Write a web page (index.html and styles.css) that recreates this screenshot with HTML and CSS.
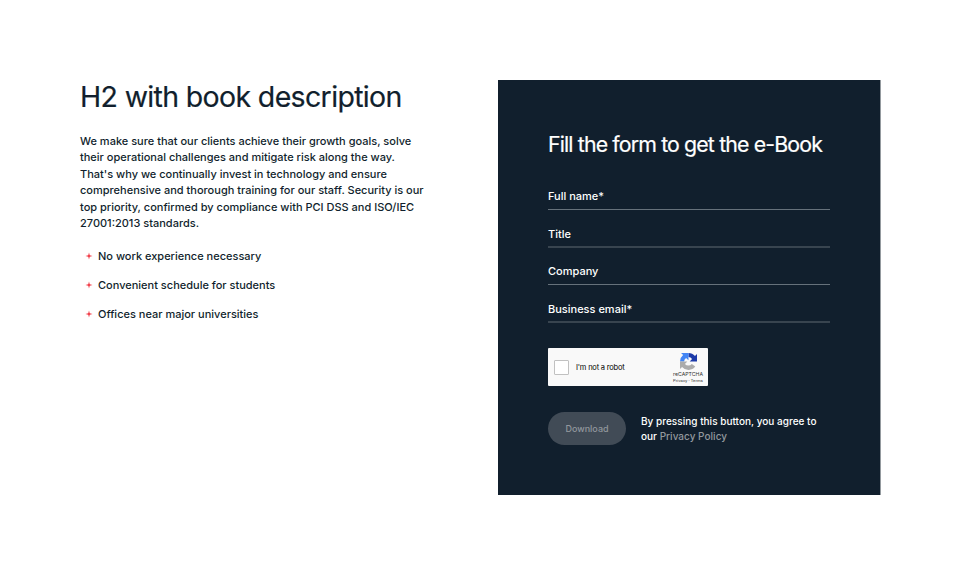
FILE: index.html
```html
<!DOCTYPE html>
<html lang="en">
<head>
<meta charset="utf-8">
<title>e-Book</title>
<link rel="stylesheet" href="styles.css">
</head>
<body>
<main class="page">
  <section class="intro">
    <h2 class="intro-title">H2 with book description</h2>
    <p class="intro-text">We make sure that our clients achieve their growth goals, solve<br>their operational challenges and mitigate risk along the way.<br>That's why we continually invest in technology and ensure<br>comprehensive and thorough training for our staff. Security is our<br>top priority, confirmed by compliance with PCI DSS and ISO/IEC<br>27001:2013 standards.</p>
    <ul class="benefits">
      <li><svg class="star" viewBox="0 0 8 8"><path d="M4 .5 4.700 3.300 7.500 4 4.700 4.700 4 7.500 3.300 4.700 .5 4 3.300 3.300Z"/></svg><span>No work experience necessary</span></li>
      <li><svg class="star" viewBox="0 0 8 8"><path d="M4 .5 4.700 3.300 7.500 4 4.700 4.700 4 7.500 3.300 4.700 .5 4 3.300 3.300Z"/></svg><span>Convenient schedule for students</span></li>
      <li><svg class="star" viewBox="0 0 8 8"><path d="M4 .5 4.700 3.300 7.500 4 4.700 4.700 4 7.500 3.300 4.700 .5 4 3.300 3.300Z"/></svg><span>Offices near major universities</span></li>
    </ul>
  </section>
  <form class="card">
    <h3 class="card-title">Fill the form to get the e-Book</h3>
    <div class="fields">
      <div class="field">Full name*</div>
      <div class="field">Title</div>
      <div class="field">Company</div>
      <div class="field">Business email*</div>
    </div>
    <div class="captcha">
      <span class="box"></span>
      <span class="robot">I'm not a robot</span>
      <div class="brand">
        <svg class="logo" viewBox="0 0 64 64">
          <path fill="#1c3aa9" d="M64 32V4l-7.700 7.700A32 32 0 0 0 31.900 0v15.500a17 17 0 0 1 13.500 7.300L36.500 32Z"/>
          <path fill="#4285f4" d="M31.900 0H4l7.700 7.700A32 32 0 0 0 0 32h15.500a17 17 0 0 1 7.300-13.500l9.100 9Z"/>
          <path fill="#ababab" d="M0 32v28l7.700-7.700A32 32 0 0 0 57.500 51L44.500 41A17 17 0 0 1 18.600 41l9-9Z"/>
        </svg>
        <span class="name">reCAPTCHA</span>
        <span class="terms">Privacy - Terms</span>
      </div>
    </div>
    <div class="actions">
      <button class="download" type="button" disabled>Download</button>
      <p class="agree">By pressing this button, you agree to<br>our <a>Privacy Policy</a></p>
    </div>
  </form>
</main>
</body>
</html>
```
FILE: styles.css
```css
* { box-sizing: border-box; margin: 0; padding: 0; }
body { background: #fff; color: #111f2d; font-family: Inter, "Liberation Sans", sans-serif; font-weight: 500; }
.page { display: flex; justify-content: space-between; align-items: flex-start; padding: 80px 80px 0 80px; }
.intro-title { font-size: 28.500px; font-weight: 400; line-height: 33px; letter-spacing: -0.65px; white-space: nowrap; -webkit-text-stroke: 0.2px; }
.intro-text { margin-top: 19.500px; font-size: 11px; line-height: 16.500px; white-space: nowrap; }
.benefits { list-style: none; margin-top: 15.500px; padding-left: 5px; font-size: 11px; }
.benefits li { display: flex; align-items: center; gap: 5px; height: 17px; margin-bottom: 12px; }
.star { width: 8px; height: 8px; fill: #f0303c; }
.card { width: 383px; height: 415px; padding: 50px; background: #111f2d; border-right: 1px solid #949a9f; color: #fff; }
.card-title { font-size: 21.300px; font-weight: 400; line-height: 28px; letter-spacing: -0.85px; white-space: nowrap; -webkit-text-stroke: 0.2px; }
.fields { display: grid; grid-template-rows: 52px 38px 37px 38px; }
.field { display: flex; align-items: flex-end; padding-bottom: 4px; border-bottom: 1px solid #66717b; font-size: 11px; line-height: 17px; }
.field:nth-child(even) { padding-bottom: 3px; border-bottom: 2px solid #38444f; }
.captcha { display: flex; align-items: center; width: 160px; height: 38px; margin-top: 25px; padding: 0 4px 0 6px; border-radius: 1px; background: #f9f9f9; color: #000; }
.box { width: 15px; height: 15px; border: 1px solid #c1c1c1; border-radius: 1px; background: #fff; }
.robot { margin-left: 7px; padding-top: 1px; font-size: 7.500px; font-weight: 400; letter-spacing: -0.2px; white-space: nowrap; }
.brand { display: flex; flex-direction: column; align-items: center; margin: 2px 1px 0 auto; white-space: nowrap; }
.logo { width: 17px; height: 17px; margin-bottom: 1px; }
.name { font-size: 5.200px; font-weight: 400; line-height: 7px; color: #333; }
.terms { font: 400 4.200px/6px Roboto, sans-serif; color: #333; letter-spacing: 0.1px; }
.actions { display: flex; align-items: center; gap: 15px; margin-top: 25.500px; }
.download { width: 78px; height: 33.500px; border: 0; border-radius: 17px; background: #414b56; color: #92979d; font: 500 9px Inter, sans-serif; }
.agree { padding-top: 1px; font-size: 10px; line-height: 15px; letter-spacing: 0.02px; white-space: nowrap; }
.agree a { color: #91979d; }
```
